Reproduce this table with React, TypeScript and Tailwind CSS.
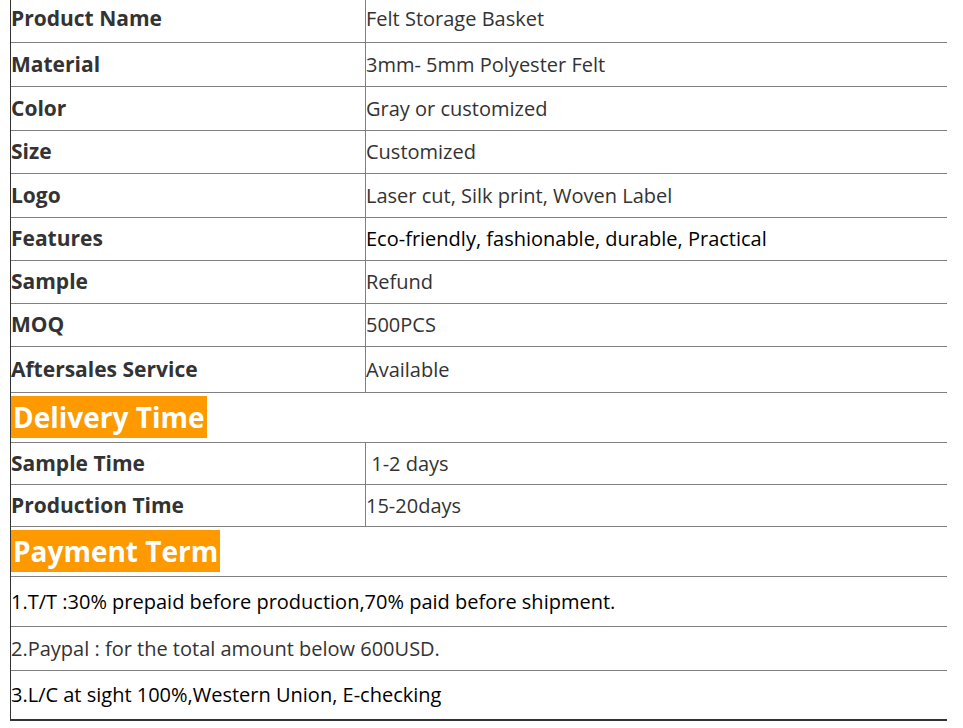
import React from "react";

const font = { fontFamily: '"Open Sans", "DejaVu Sans", sans-serif' };

type Row = { label: string; value: string; h: string; valueClass?: string; pad?: string };

const top: Row[] = [
  { label: "Product Name", value: "Felt Storage Basket", h: "h-[43px]", pad: "pb-[5px]" },
  { label: "Material", value: "3mm- 5mm Polyester Felt", h: "h-[44px]" },
  { label: "Color", value: "Gray or customized", h: "h-[44px]" },
  { label: "Size", value: "Customized", h: "h-[43px]" },
  { label: "Logo", value: "Laser cut, Silk print, Woven Label", h: "h-[44px]" },
  { label: "Features", value: "Eco-friendly, fashionable, durable, Practical", h: "h-[43px]", valueClass: "text-black" },
  { label: "Sample", value: "Refund", h: "h-[43px]" },
  { label: "MOQ", value: "500PCS", h: "h-[43px]" },
  { label: "Aftersales Service", value: "Available", h: "h-[46px]" },
];

const delivery: Row[] = [
  { label: "Sample Time", value: "\u00a01-2 days", h: "h-[42px]" },
  { label: "Production Time", value: "15-20days", h: "h-[42px]" },
];

function TwoCol({ r }: { r: Row }) {
  return (
    <div className={`flex ${r.h} border-b border-[#808080]`}>
      <div className={`w-[354px] flex items-center text-[21px] font-bold text-[#333] ${r.pad ?? ""}`}>
        {r.label}
      </div>
      <div
        className={`flex-1 flex items-center border-l border-[#808080] text-[20px] ${r.valueClass ?? "text-[#333]"} ${r.pad ?? ""}`}
      >
        {r.value}
      </div>
    </div>
  );
}

function Heading({ text, h }: { text: string; h: string }) {
  return (
    <div className={`${h} border-b border-[#808080] pt-[3px]`}>
      <span className="inline-flex items-center h-[42px] bg-[#ff9900] text-white text-[28px] font-bold px-[2px] leading-none">
        {text}
      </span>
    </div>
  );
}

function Line({ text, h, cls, last }: { text: string; h: string; cls: string; last?: boolean }) {
  return (
    <div
      className={`${h} flex items-center text-[20px] ${cls} ${
        last ? "border-b-2 border-[#333]" : "border-b border-[#808080]"
      }`}
    >
      {text}
    </div>
  );
}

export default function App() {
  return (
    <div className="w-[963px] h-[728px] bg-white overflow-hidden" style={font}>
      <div className="ml-[10px] w-[937px] border-l border-[#333]">
        {top.map((r) => (
          <TwoCol key={r.label} r={r} />
        ))}
        <Heading text="Delivery Time" h="h-[50px]" />
        {delivery.map((r) => (
          <TwoCol key={r.label} r={r} />
        ))}
        <Heading text="Payment Term" h="h-[50px]" />
        <Line text="1.T/T :30% prepaid before production,70% paid before shipment." h="h-[50px]" cls="text-black" />
        <Line text="2.Paypal : for the total amount below 600USD." h="h-[44px]" cls="text-[#333]" />
        <Line text="3.L/C at sight 100%,Western Union, E-checking" h="h-[50px]" cls="text-black" last />
      </div>
    </div>
  );
}
